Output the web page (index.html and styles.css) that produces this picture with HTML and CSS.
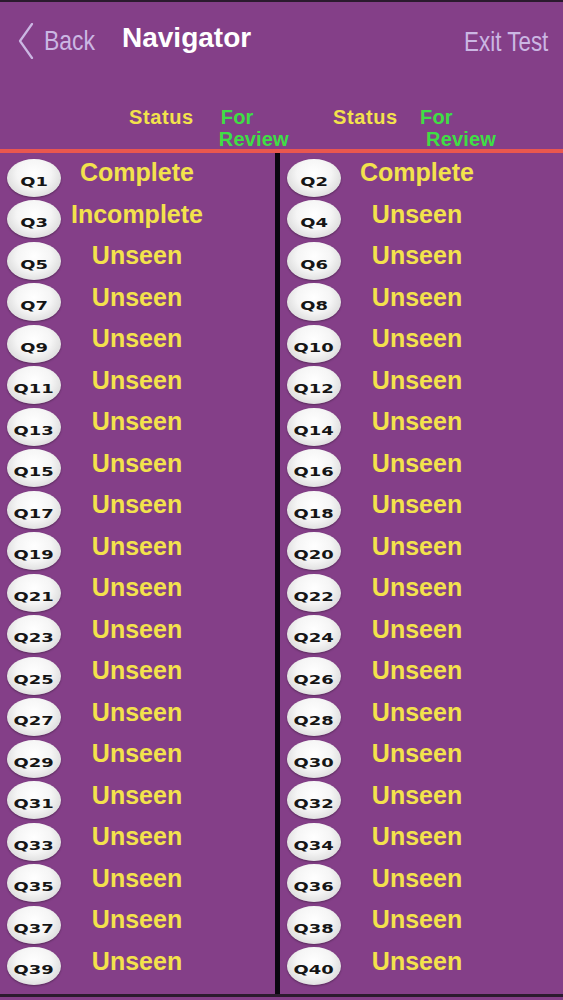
FILE: index.html
```html
<!DOCTYPE html>
<html>
<head>
<meta charset="utf-8">
<link rel="stylesheet" href="styles.css">
</head>
<body>
<div class="screen">
  <div class="edge"></div>
  <header class="nav">
    <div class="back">
      <svg class="chev" width="16" height="36" viewBox="0 0 16 36"><polyline points="14,1 2,18 14,35" fill="none" stroke="#cbb7e3" stroke-width="2.2" stroke-linecap="round" stroke-linejoin="round"/></svg>
      <span class="back-text">Back</span>
    </div>
    <div class="title">Navigator</div>
    <div class="spacer"></div>
    <div class="exit">Exit Test</div>
  </header>
  <div class="colheads">
    <div class="ch ch-left">
      <span class="st">Status</span>
      <span class="fr"><span class="fr1">For</span><span class="fr2">Review</span></span>
    </div>
    <div class="ch ch-right">
      <span class="st">Status</span>
      <span class="fr"><span class="fr1">For</span><span class="fr2">Review</span></span>
    </div>
  </div>
  <div class="redline"></div>
  <main class="grid">
    <div class="col" id="left"></div>
    <div class="divider"></div>
    <div class="col" id="right"></div>
  </main>
  <div class="edge bottom"></div>
</div>
<script src="app.js"></script>
</body>
</html>
```
FILE: app.js
```js
(function(){
  var status = {1:'Complete',2:'Complete',3:'Incomplete'};
  var left = document.getElementById('left');
  var right = document.getElementById('right');
  for (var i = 1; i <= 40; i++) {
    var row = document.createElement('div');
    row.className = 'row';
    var b = document.createElement('div');
    b.className = 'bubble';
    var t = document.createElement('span');
    t.className = 'q';
    t.textContent = 'Q' + i;
    b.appendChild(t);
    var s = document.createElement('div');
    s.className = 'status';
    s.textContent = status[i] || 'Unseen';
    row.appendChild(b);
    row.appendChild(s);
    (i % 2 ? left : right).appendChild(row);
  }
})();
```
FILE: styles.css
```css
html, body {
  margin: 0;
  padding: 0;
  background: #843f88;
}
.screen {
  width: 563px;
  height: 1000px;
  background: #843f88;
  font-family: "Liberation Sans", Arial, sans-serif;
  overflow: hidden;
}
.edge {
  height: 2px;
  background: #2b1a2e;
}
.edge.bottom {
  height: 3px;
}
.nav {
  height: 76px;
  display: flex;
  align-items: center;
  padding: 0 15px 0 18px;
}
.back {
  display: flex;
  align-items: center;
  width: 104px;
  margin-top: 2px;
}
.chev {
  display: block;
  margin-right: 10px;
}
.back-text {
  font-size: 28px;
  color: #cbb7e3;
  transform: scaleX(0.82);
  transform-origin: left center;
}
.title {
  font-size: 28px;
  font-weight: bold;
  color: #ffffff;
  margin-bottom: 5px;
}
.spacer { flex: 1; }
.exit {
  font-size: 28px;
  color: #cbb7e3;
  transform: scaleX(0.8);
  transform-origin: right center;
  margin-top: 3px;
}
.colheads {
  height: 71px;
  display: grid;
  grid-template-columns: 280px 283px;
}
.ch {
  display: flex;
  align-items: flex-start;
  padding-top: 28px;
  font-weight: bold;
  font-size: 20px;
  line-height: 22px;
}
.st {
  color: #f3e24c;
  letter-spacing: 0.6px;
  width: 65px;
  white-space: nowrap;
}
.fr {
  display: flex;
  flex-direction: column;
  color: #3fde45;
  letter-spacing: 0.2px;
}
.ch-left .st { margin-left: 129px; }
.ch-left .fr { margin-left: 25px; }
.ch-left .fr1 { padding-left: 2px; }
.ch-right .st { margin-left: 53px; }
.ch-right .fr { margin-left: 22px; }
.ch-right .fr2 { padding-left: 6px; }
.redline {
  height: 4px;
  background: #e9574f;
}
.grid {
  display: grid;
  grid-template-columns: 275px 5px 283px;
  height: 841px;
}
.divider {
  background: #0b0610;
}
.col {
  padding-top: 4px;
}
.row {
  height: 41.5px;
  display: flex;
  align-items: center;
}
.bubble {
  width: 54px;
  height: 38px;
  margin-left: 7px;
  border-radius: 50%;
  background: radial-gradient(ellipse at 50% 38%, #ffffff 0%, #f5f5f5 45%, #dedede 75%, #a9a9a9 100%);
  box-shadow: 0 1px 2px rgba(0,0,0,0.35);
  display: flex;
  align-items: center;
  justify-content: center;
  flex-shrink: 0;
}
.q {
  font-family: "DejaVu Sans", sans-serif;
  font-weight: bold;
  font-size: 13px;
  color: #151515;
  transform: scaleX(1.38);
  margin-top: 7px;
}
.status {
  width: 152px;
  text-align: center;
  font-size: 25px;
  font-weight: bold;
  color: #f3e24c;
  margin-bottom: 10px;
}
```
